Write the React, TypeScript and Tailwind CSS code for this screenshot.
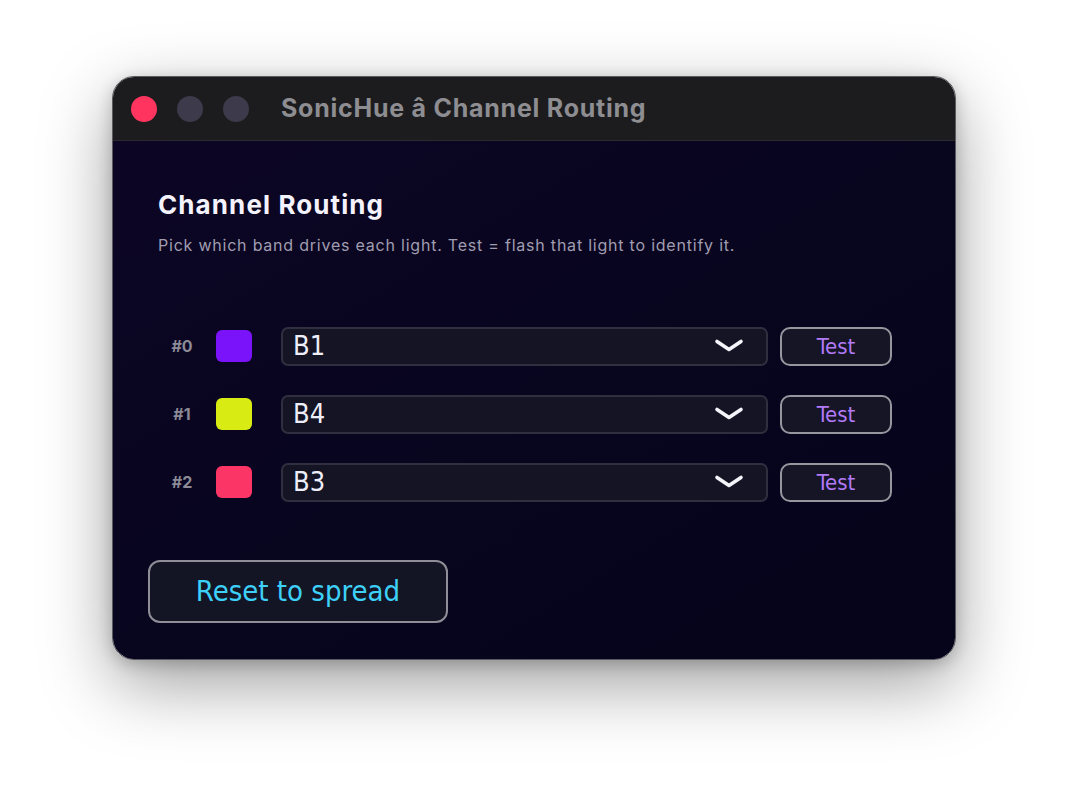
import React from "react";

const rows = [
  { id: "#0", color: "#7a12fa", band: "B1" },
  { id: "#1", color: "#d8ec13", band: "B4" },
  { id: "#2", color: "#fb3667", band: "B3" },
];

const dv: React.CSSProperties = { fontFamily: "'DejaVu Sans', sans-serif", fontStretch: "condensed" };

function Chevron() {
  return (
    <svg width="30" height="16" viewBox="0 0 30 16" fill="none">
      <path d="M3 3.5 L15 11.5 L27 3.5" stroke="#f4f4fb" strokeWidth="3.6" strokeLinecap="round" strokeLinejoin="round" />
    </svg>
  );
}

export default function App() {
  return (
    <div className="w-[1068px] h-[808px] bg-white pt-[76px] pl-[112px] overflow-hidden">
      <div className="w-[844px] h-[584px] rounded-[22px] overflow-hidden border border-[#5a5a60] shadow-[0_24px_70px_rgba(0,0,0,0.38),0_4px_16px_rgba(0,0,0,0.2)] flex flex-col">
        <div className="h-[64px] shrink-0 bg-[#1c1c1e] border-b border-[#2a2a30] flex items-center pl-[18px]">
          <div className="flex gap-[20px]">
            <div className="w-[26px] h-[26px] rounded-full bg-[#ff3560]" />
            <div className="w-[26px] h-[26px] rounded-full bg-[#3c3a4b]" />
            <div className="w-[26px] h-[26px] rounded-full bg-[#3c3a4b]" />
          </div>
          <div className="ml-[32px] text-[25px] font-bold text-[#8d8d92] tracking-[0.75px]" style={{ fontFamily: "Inter, 'Noto Sans', sans-serif" }}>
            SonicHue â Channel Routing
          </div>
        </div>
        <div className="flex-1 bg-gradient-to-br from-[#0c0624] to-[#05041a] pl-[45px] pt-[46px]" style={{ fontFamily: "Inter, 'Noto Sans', sans-serif" }}>
          <div className="text-[26px] leading-[36px] font-bold text-[#f4f2fc] tracking-[1.1px]">Channel Routing</div>
          <div className="mt-[12px] text-[16px] leading-[20px] text-[#a09db0] tracking-[0.78px]">
            Pick which band drives each light. Test = flash that light to identify it.
          </div>
          <div className="mt-[72px] flex flex-col gap-[30px] pl-[12px]">
            {rows.map((r) => (
              <div key={r.id} className="flex items-center h-[38px]">
                <div className="w-[24px] text-center text-[16px] font-bold text-[#8b8a96]">{r.id}</div>
                <div className="ml-[22px] w-[36px] h-[32px] rounded-[6px]" style={{ backgroundColor: r.color }} />
                <div className="ml-[29px] w-[487px] h-[39px] rounded-[7px] border-2 border-[#2f2f3f] bg-[#141424] flex items-center justify-between pl-[10px] pr-[22px]">
                  <span className="text-[27px] leading-[30px] text-[#eeeef8]" style={dv}>{r.band}</span>
                  <Chevron />
                </div>
                <button className="ml-[12px] w-[112px] h-[39px] rounded-[10px] border-2 border-[#97969f] bg-[#151526] text-[22px] text-[#b27af7]" style={dv}>
                  Test
                </button>
              </div>
            ))}
          </div>
          <button className="mt-[59px] -ml-[10px] w-[300px] h-[63px] rounded-[12px] border-2 border-[#8e8d98] bg-[#141524] text-[29px] text-[#3dd0f8]" style={dv}>
            Reset to spread
          </button>
        </div>
      </div>
    </div>
  );
}
